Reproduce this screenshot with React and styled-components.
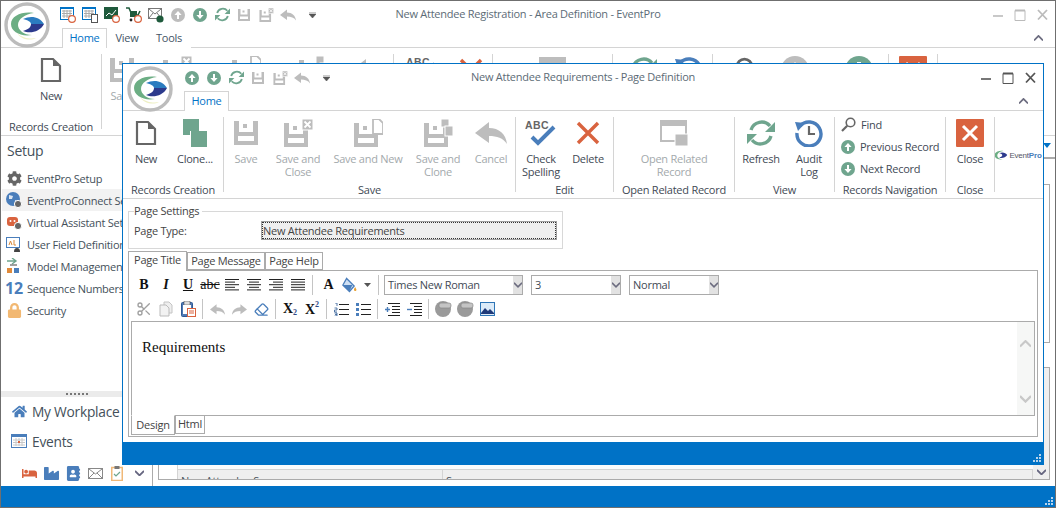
import React from 'react'
import styled, { createGlobalStyle } from 'styled-components'
import { FaCog, FaHome, FaBed, FaIndustry, FaAddressBook, FaLock } from 'react-icons/fa'
import { Scissors, Eraser } from 'lucide-react'

const BLUE = '#0072c6'
const GREY = '#bdbdbd'
const GREEN = '#6fa58e'
const STEEL = '#4a7ebb'
const RED = '#d9633f'

const GlobalStyle = createGlobalStyle`
    html, body {
        margin: 0;
        padding: 0;
        background: #fff;
        overflow: hidden;
    }
    body {
        font-family: 'Open Sans', 'Noto Sans', sans-serif;
        font-size: 11px;
        letter-spacing: -0.25px;
        color: #444;
    }
    * {
        box-sizing: border-box;
    }
`

/* ---------- icons ---------- */

const Logo = ({ size = 46 }) => (
    <svg width={size} height={size} viewBox='0 0 46 46'>
        <circle cx='23' cy='23' r='21' fill='#fff' stroke='#bcbcbc' strokeWidth='3.4' />
        <path d='M30 11C18 9 7 14 7 22c0 8 10 13 21 11-8 0-14-5-14-10 0-6 7-11 16-12z' fill='#6cae84' />
        <path d='M19 17c8-4 17-2 21 5-9 0-14 0-13 0 0-2-3-4-8-5z' fill='#2b7cc0' />
        <path d='M19 29c6-2 8-4 8-7h13c-4 8-14 10-21 7z' fill='#2c3a8c' />
        <path d='M13 31c6 6 15 6 19 5-5 3-15 2-19-5z' fill='#eef0c4' />
    </svg>
)

const PageIcon = () => (
    <svg width='22' height='26' viewBox='0 0 22 26'>
        <path d='M2 2h11l7 7v15H2z' fill='#fff' stroke='#666' strokeWidth='2.2' />
        <path d='M13 2v7h7z' fill='#666' />
    </svg>
)

const CloneIcon = () => (
    <svg width='26' height='28' viewBox='0 0 26 28'>
        <rect x='1' y='0' width='16' height='16' fill={GREEN} />
        <rect x='8' y='12' width='17' height='16' fill='#fff' />
        <rect x='9' y='12' width='16' height='16' fill={GREEN} />
    </svg>
)

const Floppy = ({ x = 0, y = 0, s = 24 }) => (
    <svg x={x} y={y} width={s} height={s} viewBox='0 0 24 24'>
        <rect width='24' height='24' fill={GREY} />
        <rect x='5' y='0' width='14' height='11' fill='#fff' />
        <rect x='9' y='3' width='4' height='4' fill={GREY} />
        <rect x='4' y='15' width='16' height='5' fill='#fff' />
    </svg>
)

const SaveIcon = ({ small }) => {
    const s = small ? 12 : 24
    return (
        <svg width={s} height={s} viewBox='0 0 24 24'>
            <Floppy />
        </svg>
    )
}

const SaveCloseIcon = ({ small }) => (
    <svg width={small ? 15 : 29} height={small ? 14 : 28} viewBox='0 0 29 28'>
        <Floppy y='4' s='24' />
        <rect x='18' y='0' width='11' height='11' fill={GREY} stroke='#fff' />
        <path d='M20.5 2.5l6 6m0-6l-6 6' stroke='#fff' strokeWidth='1.8' />
    </svg>
)

const SaveNewIcon = () => (
    <svg width='29' height='28' viewBox='0 0 29 28'>
        <Floppy y='4' s='24' />
        <path d='M19 0h6l4 4v11H19z' fill='#fff' stroke={GREY} strokeWidth='1.8' />
    </svg>
)

const SaveCloneIcon = () => (
    <svg width='29' height='28' viewBox='0 0 29 28'>
        <Floppy y='4' s='24' />
        <rect x='17' y='0' width='8' height='8' fill={GREY} stroke='#fff' />
        <rect x='21' y='7' width='8' height='10' fill={GREY} stroke='#fff' />
    </svg>
)

const BackArrow = ({ w = 32, h = 22, color = GREY, flip }) => (
    <svg width={w} height={h} viewBox='0 0 32 22' style={flip ? { transform: 'scaleX(-1)' } : undefined}>
        <path d='M0 11L14 0v6c10 0 17 6 18 16-4-6-10-8-18-8v7z' fill={color} />
    </svg>
)

const SpellIcon = () => (
    <svg width='32' height='28' viewBox='0 0 32 28'>
        <text x='0' y='10' fontFamily='Liberation Sans, sans-serif' fontWeight='700' fontSize='10.5' fill='#666' letterSpacing='0.4'>
            ABC
        </text>
        <path d='M7 18l6 6L29 8' fill='none' stroke={STEEL} strokeWidth='4' />
    </svg>
)

const CrossIcon = () => (
    <svg width='24' height='24' viewBox='0 0 24 24'>
        <path d='M2 2l20 20M22 2L2 22' stroke={RED} strokeWidth='3.4' />
    </svg>
)

const RelatedIcon = () => (
    <svg width='28' height='26' viewBox='0 0 28 26'>
        <rect x='1' y='1' width='25' height='20' fill='#fff' stroke={GREY} strokeWidth='2' />
        <rect x='0' y='0' width='27' height='6' fill={GREY} />
        <rect x='15' y='14' width='13' height='12' fill={GREY} stroke='#fff' />
    </svg>
)

const RefreshIcon = ({ size = 28, color = GREEN }) => (
    <svg width={size} height={size} viewBox='0 0 28 28'>
        <path d='M4 11a11 11 0 0 1 19-4' fill='none' stroke={color} strokeWidth='3.4' />
        <path d='M28 3v10H18z' fill={color} />
        <path d='M24 17a11 11 0 0 1-19 4' fill='none' stroke={color} strokeWidth='3.4' />
        <path d='M0 25V15h10z' fill={color} />
    </svg>
)

const AuditIcon = () => (
    <svg width='28' height='28' viewBox='0 0 28 28'>
        <path d='M5 7a12 12 0 1 1-3 7' fill='none' stroke={STEEL} strokeWidth='3.4' />
        <path d='M0 3l10 1-7 8z' fill={STEEL} />
        <path d='M14 7v8h6' fill='none' stroke='#666' strokeWidth='2.2' />
    </svg>
)

const MagnifierIcon = ({ size = 15, color = '#666' }) => (
    <svg width={size} height={size} viewBox='0 0 15 15'>
        <circle cx='9.5' cy='5.5' r='4.3' fill='none' stroke={color} strokeWidth='1.6' />
        <path d='M6.2 8.8L1 14' stroke={color} strokeWidth='2.2' />
    </svg>
)

const CircleArrow = ({ down, size = 14, color = GREEN }) => (
    <svg width={size} height={size} viewBox='0 0 14 14'>
        <circle cx='7' cy='7' r='7' fill={color} />
        <path d={down ? 'M7 11L3.4 7H6V3h2v4h2.6z' : 'M7 3l3.6 4H8v4H6V7H3.4z'} fill='#fff' />
    </svg>
)

const CloseBox = () => (
    <svg width='28' height='28' viewBox='0 0 28 28'>
        <rect width='28' height='28' rx='1' fill={RED} />
        <path d='M7 7l14 14M21 7L7 21' stroke='#fff' strokeWidth='3' />
    </svg>
)

const CalendarClock = ({ doc }) => (
    <svg width='16' height='16' viewBox='0 0 16 16'>
        <rect x='0.5' y='0.5' width='13' height='12' fill='#fff' stroke={BLUE} />
        <rect x='0' y='0' width='14' height='2' fill={BLUE} />
        <path d='M2 4h10M2 6.5h10M2 9h10M4 3v8M7 3v8M10 3v8' stroke='#aaa' strokeWidth='1' />
        {doc ? (
            <rect x='9.5' y='7.5' width='6' height='8' fill='#fff' stroke='#555' />
        ) : (
            <circle cx='12' cy='12' r='3.4' fill='#fff' stroke={RED} strokeWidth='1.2' />
        )}
    </svg>
)

const ChartClock = () => (
    <svg width='16' height='16' viewBox='0 0 16 16'>
        <rect width='14' height='12' fill='#1f5a3c' />
        <path d='M2 9l3-3 3 2 4-5' fill='none' stroke='#fff' strokeWidth='1' />
        <circle cx='12' cy='12' r='3.4' fill='#fff' stroke={RED} strokeWidth='1.2' />
    </svg>
)

const CartClock = () => (
    <svg width='16' height='16' viewBox='0 0 16 16'>
        <path d='M0 1h3l3 7h6l2-4' fill='none' stroke='#1f5a3c' strokeWidth='1.6' />
        <rect x='4' y='4' width='7' height='6' fill='#1f5a3c' />
        <circle cx='5' cy='13' r='1.4' fill='#222' />
        <circle cx='12' cy='12' r='3.4' fill='#fff' stroke={RED} strokeWidth='1.2' />
    </svg>
)

const MailBadge = () => (
    <svg width='17' height='16' viewBox='0 0 17 16'>
        <rect x='0.5' y='1.5' width='13' height='10' fill='#fff' stroke='#777' />
        <path d='M1 2l6 5 6-5M1 11l4-5M13 11L9 6' fill='none' stroke='#777' />
        <circle cx='12' cy='12' r='3.6' fill='#1f5a3c' />
    </svg>
)

const MiniLogo = () => (
    <LogoMark>
        <svg width='13' height='11' viewBox='8 9 34 28'>
            <path d='M30 11C18 9 7 14 7 22c0 8 10 13 21 11-8 0-14-5-14-10 0-6 7-11 16-12z' fill='#6cae84' />
            <path d='M19 17c8-4 17-2 21 5-4 7-14 9-21 7 6-2 8-4 8-7 0-2-3-4-8-5z' fill='#2c3a8c' />
        </svg>
        <span>
            Event<b>Pro</b>
        </span>
    </LogoMark>
)

const AlignIcon = ({ type }) => {
    const lines = {
        left: [[0, 14], [0, 10], [0, 14], [0, 10], [0, 14]],
        center: [[0, 14], [2, 12], [0, 14], [2, 12], [0, 14]],
        right: [[0, 14], [4, 14], [0, 14], [4, 14], [0, 14]],
        full: [[0, 14], [0, 14], [0, 14], [0, 14], [0, 14]],
    }[type]
    return (
        <svg width='14' height='12' viewBox='0 0 14 12'>
            {lines.map(([a, b], i) => (
                <path key={i} d={`M${a} ${i * 2.6 + 0.5}H${b}`} stroke='#222' />
            ))}
        </svg>
    )
}

const FillIcon = () => (
    <svg width='17' height='17' viewBox='0 0 17 17'>
        <path d='M6 1l8 8-5 6-7-7z' fill='#cfe0f4' stroke={STEEL} strokeWidth='1.4' />
        <path d='M2 8h10l-3 7z' fill={STEEL} />
        <path d='M15 10c1 2 2 3 1 4s-3 0-2-2z' fill='#e8a030' />
    </svg>
)

const CopyIcon = () => (
    <svg width='15' height='16' viewBox='0 0 15 16'>
        <path d='M5 1h5l3 3v8H5z' fill='#eee' stroke='#c4c4c4' />
        <path d='M1 4h6l3 3v8H1z' fill='#f2f2f2' stroke='#bbb' />
    </svg>
)

const PasteIcon = () => (
    <svg width='15' height='16' viewBox='0 0 15 16'>
        <rect x='0.5' y='1.5' width='11' height='14' rx='1' fill='#4f7ab5' stroke='#2e5a96' />
        <rect x='3' y='0' width='6' height='4' fill='#ddd' stroke='#555' strokeWidth='0.6' />
        <rect x='2' y='4' width='8' height='9' fill='#fff' />
        <rect x='6.5' y='7.5' width='8' height='8' fill='#fff' stroke={RED} />
        <path d='M8 10h5M8 12h5' stroke={RED} />
    </svg>
)

const ScriptIcon = ({ up }) => (
    <ScriptMark>
        X<sub data-up={up ? 1 : 0}>2</sub>
    </ScriptMark>
)

const ListIcon = ({ numbered }) => (
    <svg width='15' height='13' viewBox='0 0 15 13'>
        <path d='M5 1.5h10M5 6.5h10M5 11.5h10' stroke='#222' />
        {numbered ? (
            <path d='M1 0h2v3M0.5 5H3V7H0.5V9H3M0.5 10H3v3H0.5M1 11.5h2' fill='none' stroke='#2e5a96' strokeWidth='0.8' />
        ) : (
            <path d='M0 0h3v3H0zM0 5h3v3H0zM0 10h3v3H0z' fill={STEEL} />
        )}
    </svg>
)

const IndentIcon = ({ out }) => (
    <svg width='15' height='13' viewBox='0 0 15 13'>
        <path d='M3 0.5h12M7 3.5h8M7 6.5h8M7 9.5h8M3 12.5h12' stroke='#222' />
        <path d={out ? 'M0 6.5h5' : 'M0 6.5h5M2.5 4v5'} stroke={STEEL} strokeWidth='1.4' />
    </svg>
)

const LinkIcon = () => (
    <svg width='17' height='16' viewBox='0 0 17 16'>
        <circle cx='8' cy='8' r='8' fill='#9a9a9a' />
        <rect x='4' y='2' width='12' height='5' rx='2' fill='#c4c4c4' stroke='#888' strokeWidth='0.7' />
    </svg>
)

const PictureIcon = () => (
    <svg width='15' height='14' viewBox='0 0 15 14'>
        <rect x='0.5' y='0.5' width='14' height='13' fill='#dcebf8' stroke='#2e75b6' />
        <path d='M1 11l4-5 3 3 2-2 4 4v1H1z' fill='#1f3a7a' />
    </svg>
)

const GlobeGear = () => (
    <NavGlyph>
        <svg width='16' height='16' viewBox='0 0 16 16'>
            <circle cx='7' cy='7' r='7' fill={STEEL} />
            <path d='M3 3l4 1-1 3-3 0zM9 8l3 1-2 4-1-2z' fill='#dce6f2' />
            <circle cx='12' cy='12' r='3.6' fill='#666' stroke='#fff' />
        </svg>
    </NavGlyph>
)

const RobotGear = () => (
    <NavGlyph>
        <svg width='16' height='16' viewBox='0 0 16 16'>
            <rect x='1' y='3' width='11' height='9' rx='3' fill={RED} />
            <circle cx='4.5' cy='7' r='1' fill='#fff' />
            <circle cx='8.5' cy='7' r='1' fill='#fff' />
            <circle cx='12' cy='12' r='3.6' fill='#666' stroke='#fff' />
        </svg>
    </NavGlyph>
)

const FieldIcon = () => (
    <NavGlyph>
        <svg width='16' height='16' viewBox='0 0 16 16'>
            <rect x='0.5' y='1.5' width='13' height='10' fill='#fff' stroke={STEEL} />
            <path d='M3 9l1.5-4L6 9M8 4v5h2' fill='none' stroke='#d98a3a' />
            <path d='M8 16c0-3 1-4 3-4s3 1 3 4z' fill='#444' />
        </svg>
    </NavGlyph>
)

const ModelIcon = () => (
    <NavGlyph>
        <svg width='16' height='16' viewBox='0 0 16 16'>
            <path d='M1 3h8M6 0l4 3-4 3' fill='none' stroke={GREEN} strokeWidth='1.4' />
            <rect x='1' y='10' width='5' height='5' fill='#e08a3a' />
            <rect x='8' y='10' width='5' height='5' fill={STEEL} />
            <path d='M4 7h7' stroke='#777' strokeWidth='1.4' />
        </svg>
    </NavGlyph>
)

const EventsIcon = () => (
    <svg width='16' height='14' viewBox='0 0 16 14'>
        <rect x='0.5' y='0.5' width='15' height='13' fill='#fff' stroke={STEEL} />
        <rect x='0' y='0' width='16' height='3' fill={STEEL} />
        <path d='M2 6h12M2 8.5h12M2 11h12M5 4v8M8 4v8M11 4v8' stroke='#c8c8c8' />
        <rect x='7' y='7' width='2' height='2' fill={RED} />
    </svg>
)

const MailIcon = () => (
    <svg width='15' height='11' viewBox='0 0 15 11'>
        <rect x='0.5' y='0.5' width='14' height='10' fill='#fff' stroke='#888' />
        <path d='M1 1l6.5 5L14 1M1 10l5-5M14 10L9 5' fill='none' stroke='#888' />
    </svg>
)

const TaskIcon = () => (
    <svg width='12' height='15' viewBox='0 0 12 15'>
        <rect x='0.75' y='1.5' width='10.5' height='13' fill='#fff' stroke='#f0b878' strokeWidth='1.5' />
        <rect x='3.5' y='0' width='5' height='3' fill='#777' />
        <path d='M3 8l2 2 4-4' fill='none' stroke={GREEN} strokeWidth='1.2' />
    </svg>
)

const Chevron = ({ up, size = 9, color = '#6d6d80' }) => (
    <svg width={size} height={size * 0.7} viewBox='0 0 10 7'>
        <path d={up ? 'M0 6l5-5 5 5' : 'M0 1l5 5 5-5'} fill='none' stroke={color} strokeWidth='2' />
    </svg>
)

const QatDrop = () => (
    <svg width='7' height='6' viewBox='0 0 7 6'>
        <path d='M0 0h7M0 2h7L3.5 6z' fill='#555' stroke='#555' strokeWidth='0.6' />
    </svg>
)

const Grip = () => (
    <GripBox>
        <svg width='9' height='9' viewBox='0 0 9 9'>
            <path d='M7 1h2v2H7zM4 4h2v2H4zM7 4h2v2H7zM1 7h2v2H1zM4 7h2v2H4zM7 7h2v2H7z' fill='#b8d4ec' />
        </svg>
    </GripBox>
)

const WinControls = ({ muted }) => (
    <Controls>
        <svg width='14' height='14' viewBox='0 0 14 14'>
            <path d='M2 8h10' stroke={muted ? '#bbb' : '#555'} strokeWidth='1.6' />
        </svg>
        <svg width='12' height='14' viewBox='0 0 12 14'>
            <path d='M1 2.5h10v10H1z' fill='none' stroke={muted ? '#bbb' : '#555'} />
            <path d='M1 2.5h10' stroke={muted ? '#bbb' : '#555'} strokeWidth='2' />
        </svg>
        <svg width='14' height='14' viewBox='0 0 14 14'>
            <path d='M3 2l9 9.500M12 2l-9 9.500' stroke={muted ? '#bbb' : '#555'} strokeWidth='1.8' />
        </svg>
    </Controls>
)

/* ---------- chrome shared by both windows ---------- */

const TitleRow = styled.div`
    display: grid;
    grid-template-columns: 1fr auto 1fr;
    align-items: center;
    height: 27px;
    font-size: 11px;
    color: #5c6b76;
`

const TitleText = styled.span`
    margin-top: -2px;
`

const Qat = styled.div`
    display: flex;
    align-items: center;
    padding-left: ${(p) => p.$left}px;
`

const QatSlot = styled.span`
    flex: none;
    display: flex;
    align-items: center;
    justify-content: center;
    width: 22px;
    height: 18px;
    margin-left: ${(p) => p.$shift || 0}px;
`

const Controls = styled.div`
    display: flex;
    justify-content: flex-end;
    align-items: center;
    gap: 9px;
    padding-right: 6px;
`

const TabRow = styled.div`
    display: flex;
    align-items: flex-end;
    height: 19px;
    padding-left: ${(p) => p.$left}px;
    position: relative;
    font-size: 11px;
`

const RibbonTab = styled.div`
    height: 20px;
    margin-bottom: -1px;
    line-height: 18px;
    text-align: center;
    width: ${(p) => p.$w}px;
    color: ${(p) => (p.$active ? BLUE : '#445566')};
    background: #fff;
    border: 1px solid ${(p) => (p.$active ? '#d4d4d4' : 'transparent')};
    border-bottom: 0;
    position: relative;
    z-index: 1;
`

const Collapse = styled.span`
    position: absolute;
    right: ${(p) => p.$right}px;
    top: 7px;
    display: flex;
`

const Ribbon = styled.div`
    display: flex;
    height: 89px;
    padding-top: 6px;
    border-top: 1px solid #d4d4d4;
    border-bottom: 1px solid #d4d4d4;
`

const Group = styled.div`
    flex: none;
    display: flex;
    flex-direction: column;
    width: ${(p) => p.$w}px;
    height: 75px;
    border-right: 1px solid ${(p) => (p.$plain ? 'transparent' : '#d4d4d4')};
`

const GroupItems = styled.div`
    flex: 1;
    display: flex;
    justify-content: ${(p) => (p.$center ? 'center' : 'flex-start')};
    gap: ${(p) => p.$gap || 0}px;
    padding-left: ${(p) => p.$left || 0}px;
    min-height: 0;
`

const GroupLabel = styled.div`
    height: 13px;
    margin-bottom: -4px;
    line-height: 13px;
    text-align: center;
    white-space: nowrap;
    color: #3f4a55;
`

const BigButton = styled.div`
    flex: none;
    display: flex;
    flex-direction: column;
    align-items: center;
    width: ${(p) => p.$w}px;
    color: ${(p) => (p.$off ? '#a3a9ac' : '#3f4a55')};
`

const BigIcon = styled.div`
    display: flex;
    align-items: center;
    justify-content: center;
    height: 31px;
    width: 100%;
`

const BigLabel = styled.div`
    margin-top: 4px;
    line-height: 13px;
    text-align: center;
    white-space: nowrap;
`

const Stack = styled.div`
    display: flex;
    flex-direction: column;
    gap: 7px;
    padding-left: 6px;
`

const StackRow = styled.div`
    display: flex;
    align-items: center;
    gap: 5px;
    height: 15px;
    white-space: nowrap;
    color: #3f4a55;
`

const LogoMark = styled.div`
    align-self: flex-start;
    display: flex;
    align-items: center;
    gap: 1px;
    height: 20px;
    margin-top: 28px;
    font-family: 'Liberation Sans', sans-serif;
    font-size: 8px;
    letter-spacing: -0.2px;
    color: #556;
    b {
        color: ${STEEL};
    }
`

const StatusBar = styled.div`
    flex: none;
    position: relative;
    height: ${(p) => p.$h}px;
    background: ${BLUE};
`

const GripBox = styled.span`
    position: absolute;
    right: 2px;
    bottom: 2px;
    display: flex;
`

/* ---------- back window ---------- */

const Desktop = styled.div`
    position: relative;
    display: flex;
    flex-direction: column;
    width: 1056px;
    height: 508px;
    overflow: hidden;
    background: #fff;
    border: 1px solid #6f6f6f;
`

const LogoSlot = styled.div`
    position: absolute;
    left: ${(p) => p.$x}px;
    top: ${(p) => p.$y}px;
    display: flex;
    z-index: 2;
`

const BackBody = styled.div`
    flex: 1;
    display: flex;
    min-height: 0;
`

const Rail = styled.nav`
    flex: none;
    display: flex;
    flex-direction: column;
    width: 152px;
    border-right: 1px solid #ababab;
`

const RailTitle = styled.div`
    height: 30px;
    padding-left: 6px;
    font-size: 14px;
    line-height: 30px;
    color: #44505a;
`

const RailList = styled.div`
    display: flex;
    flex-direction: column;
    margin-top: 1px;
`

const RailRow = styled.div`
    display: flex;
    align-items: center;
    gap: 5px;
    height: 22px;
    margin-left: 1px;
    padding-left: 4px;
    white-space: nowrap;
    overflow: hidden;
    color: #44505a;
    background: ${(p) => (p.$on ? '#f2f2f2' : 'transparent')};
`

const NavGlyph = styled.span`
    flex: none;
    display: flex;
    align-items: center;
    justify-content: center;
    width: 16px;
    height: 16px;
    color: ${(p) => p.color || '#666'};
    font-size: ${(p) => p.$size || 15}px;
    font-weight: 700;
`

const Splitter = styled.div`
    display: flex;
    align-items: center;
    justify-content: center;
    gap: 2px;
    height: 6px;
    margin-top: auto;
    background: #ebebeb;
    i {
        width: 2px;
        height: 2px;
        background: #777;
    }
`

const WideRow = styled.div`
    display: flex;
    align-items: center;
    gap: 5px;
    height: 30px;
    padding: 0 0 2px 10px;
    font-size: 13.75px;
    color: #44505a;
`

const IconStrip = styled.div`
    display: flex;
    align-items: center;
    gap: 6px;
    height: 29px;
    padding: 3px 0 0 20px;
    color: ${STEEL};
    font-size: 14px;
`

const BackMain = styled.div`
    flex: 1;
    display: flex;
    flex-direction: column;
    padding: 0 5px 6px 5px;
    min-width: 0;
`

const BackStrip = styled.div`
    position: relative;
    height: 23px;
    border-bottom: 2px solid #ababab;
    margin-right: -5px;
`

const BlueDrop = styled.span`
    position: absolute;
    right: 4px;
    top: 7px;
    width: 0;
    height: 0;
    border-left: 4px solid transparent;
    border-right: 4px solid transparent;
    border-top: 5px solid ${BLUE};
`

const UpperBox = styled.div`
    height: 159px;
    margin-top: 25px;
    border: 1px solid #ababab;
`

const LowerBox = styled.div`
    display: flex;
    flex: 1;
    margin-top: 24px;
    border: 1px solid #ababab;
`

const Gutter = styled.div`
    flex: none;
    width: 19px;
    border-right: 1px solid #d4d4d4;
`

const Sheet = styled.div`
    flex: 1;
    display: flex;
    flex-direction: column;
    min-width: 0;
`

const SheetSpace = styled.div`
    height: 24px;
    border-bottom: 1px solid #d4d4d4;
`

const SheetFill = styled.div`
    flex: 1;
    background: #fbfbfb;
    border-bottom: 1px solid #d4d4d4;
`

const SheetFoot = styled.div`
    display: grid;
    grid-template-columns: 265px 1fr;
    height: 9px;
    background: #efefef;
    overflow: hidden;
    line-height: 13px;
    color: #44505a;
    div {
        padding: 4px 0 0 3px;
        white-space: nowrap;
        border-right: 1px solid #d4d4d4;
    }
`

const ScrollCol = styled.div`
    flex: none;
    display: flex;
    flex-direction: column;
    justify-content: flex-end;
    align-items: center;
    width: 16px;
    background: #efefef;
    padding-bottom: 4px;
`

/* ---------- dialog ---------- */

const Dialog = styled.section`
    position: absolute;
    left: 121px;
    top: 62px;
    display: flex;
    flex-direction: column;
    width: 922px;
    height: 402px;
    background: #fff;
    border: 1px solid ${BLUE};
    z-index: 3;
`

const DialogBody = styled.div`
    flex: 1;
    display: flex;
    flex-direction: column;
    padding: 6px 5px 5px;
    min-height: 0;
`

const Settings = styled.fieldset`
    width: 435px;
    height: 44px;
    margin: 0;
    padding: 0 5px;
    border: 1px solid #d8d8d8;
    legend {
        padding: 0 3px 0 0;
        line-height: 12px;
    }
`

const SettingsRow = styled.div`
    display: flex;
    align-items: center;
    margin-top: 4px;
`

const FieldLabel = styled.span`
    width: 127px;
`

const FieldValue = styled.div`
    width: 296px;
    height: 19px;
    padding-left: 1px;
    line-height: 18px;
    background: #efefef;
    border: 1px solid #a0a0a0;
    outline: 1px dotted #333;
    outline-offset: -2px;
`

const PageTabs = styled.div`
    display: flex;
    align-items: flex-end;
    height: 19px;
    margin-top: 2px;
`

const PageTab = styled.div`
    width: ${(p) => p.$w}px;
    height: ${(p) => (p.$active ? 20 : 18)}px;
    margin-bottom: ${(p) => (p.$active ? -1 : 0)}px;
    line-height: 16px;
    text-align: center;
    background: #fff;
    border: 1px solid #ababab;
    border-bottom: ${(p) => (p.$active ? 0 : 1)}px solid #ababab;
    position: relative;
    z-index: 1;
`

const Panel = styled.div`
    flex: 1;
    display: flex;
    flex-direction: column;
    padding: 4px 2px 0;
    border: 1px solid #ababab;
    min-height: 0;
`

const Tools = styled.div`
    display: flex;
    align-items: center;
    height: ${(p) => p.$h}px;
    padding-left: 2px;
    margin-top: ${(p) => p.$top || 0}px;
`

const Tool = styled.span`
    flex: none;
    display: flex;
    align-items: center;
    justify-content: center;
    width: ${(p) => p.$w || 22}px;
    height: 20px;
    color: ${(p) => p.$color || '#111'};
    font-family: 'Liberation Serif', serif;
    font-size: 14px;
    letter-spacing: 0;
    font-weight: ${(p) => (p.$bold ? 700 : 400)};
    font-style: ${(p) => (p.$italic ? 'italic' : 'normal')};
    text-decoration: ${(p) => p.$line || 'none'};
`

const ToolGap = styled.span`
    flex: none;
    width: 1px;
    height: 20px;
    margin: 0 ${(p) => (p.$tight ? 0 : 3)}px 0 ${(p) => (p.$tight ? 0 : 3)}px;
    background: #c4c4c4;
`

const ScriptMark = styled.span`
    font-family: 'Liberation Serif', serif;
    font-weight: 700;
    font-size: 14px;
    color: #111;
    sub {
        font-size: 8px;
        color: #2e4a86;
        vertical-align: -2px;
        &[data-up='1'] {
            vertical-align: 7px;
        }
    }
`

const Combo = styled.div`
    flex: none;
    display: flex;
    width: ${(p) => p.$w}px;
    height: 20px;
    margin-left: ${(p) => p.$left || 0}px;
    border: 1px solid #ababab;
    font-size: 11px;
    line-height: 18px;
`

const ComboText = styled.span`
    flex: 1;
    padding-left: 3px;
    color: #3f4a55;
    white-space: nowrap;
`

const ComboDrop = styled.span`
    flex: none;
    display: flex;
    align-items: center;
    justify-content: center;
    width: 9px;
    background: #e2e2e2;
`

const Editor = styled.div`
    display: flex;
    height: 95px;
    margin-top: 1px;
    border: 1px solid #ababab;
`

const EditorText = styled.div`
    flex: 1;
    padding: 16px 0 0 10px;
    font-family: 'Liberation Serif', serif;
    font-size: 15px;
    letter-spacing: 0;
    line-height: 18px;
    color: #111;
`

const EditorScroll = styled.div`
    flex: none;
    display: flex;
    flex-direction: column;
    align-items: center;
    justify-content: space-between;
    width: 17px;
    padding: 18px 0 12px;
    background: #f6f7f6;
`

const ModeTabs = styled.div`
    display: flex;
    align-items: flex-start;
    margin-top: -1px;
`

const ModeTab = styled.div`
    width: ${(p) => p.$w}px;
    height: ${(p) => (p.$active ? 20 : 19)}px;
    line-height: ${(p) => (p.$active ? 18 : 16)}px;
    text-align: center;
    background: #fff;
    border: 1px solid #ababab;
    border-top: ${(p) => (p.$active ? '1px solid #fff' : '1px solid #ababab')};
`

/* ---------- data ---------- */

const backQat = [
    <CalendarClock />, <CalendarClock doc />, <ChartClock />, <CartClock />, <MailBadge />,
    <CircleArrow color={GREY} />, <CircleArrow down />, <RefreshIcon size={15} />,
    <SaveIcon small />, <SaveCloseIcon small />, <BackArrow w={16} h={12} />,
]

const dialogQat = [
    <CircleArrow />, <CircleArrow down />, <RefreshIcon size={15} />,
    <SaveIcon small />, <SaveCloseIcon small />, <BackArrow w={16} h={12} />,
]

const railRows = [
    { icon: <NavGlyph><FaCog /></NavGlyph>, text: 'EventPro Setup' },
    { icon: <GlobeGear />, text: 'EventProConnect Setup', on: true },
    { icon: <RobotGear />, text: 'Virtual Assistant Setup' },
    { icon: <FieldIcon />, text: 'User Field Definitions' },
    { icon: <ModelIcon />, text: 'Model Management' },
    { icon: <NavGlyph color={STEEL} $size={16}>12</NavGlyph>, text: 'Sequence Numbers' },
    { icon: <NavGlyph color='#f2b872'><FaLock /></NavGlyph>, text: 'Security' },
]

const App = () => (
    <>
        <GlobalStyle />
        <Desktop>
            <LogoSlot $x={3} $y={1}>
                <Logo />
            </LogoSlot>
            <TitleRow>
                <Qat $left={56}>
                    {backQat.map((icon, i) => (
                        <QatSlot key={i}>{icon}</QatSlot>
                    ))}
                    <QatSlot $shift={2}>
                        <QatDrop />
                    </QatSlot>
                </Qat>
                <TitleText>New Attendee Registration - Area Definition - EventPro</TitleText>
                <WinControls muted />
            </TitleRow>
            <TabRow $left={61}>
                <RibbonTab $active $w={45}>Home</RibbonTab>
                <RibbonTab $w={40}>View</RibbonTab>
                <RibbonTab $w={44}>Tools</RibbonTab>
                <Collapse $right={12}>
                    <Chevron up />
                </Collapse>
            </TabRow>
            <Ribbon>
                <Group $w={101}>
                    <GroupItems $center>
                        <BigButton $w={60}>
                            <BigIcon><PageIcon /></BigIcon>
                            <BigLabel>New</BigLabel>
                        </BigButton>
                    </GroupItems>
                    <GroupLabel>Records Creation</GroupLabel>
                </Group>
                <Group $w={292}>
                    <GroupItems $left={2} $gap={3}>
                        <BigButton $off $w={36}>
                            <BigIcon><SaveIcon /></BigIcon>
                            <BigLabel>Save</BigLabel>
                        </BigButton>
                        <BigButton $off $w={68}>
                            <BigIcon><SaveCloseIcon /></BigIcon>
                        </BigButton>
                        <BigButton $off $w={64}>
                            <BigIcon><SaveNewIcon /></BigIcon>
                        </BigButton>
                        <BigButton $off $w={64}>
                            <BigIcon><SaveCloneIcon /></BigIcon>
                        </BigButton>
                        <BigButton $off $w={40}>
                            <BigIcon><BackArrow /></BigIcon>
                        </BigButton>
                    </GroupItems>
                </Group>
                <Group $w={99}>
                    <GroupItems $left={8} $gap={14}>
                        <BigButton $w={40}><BigIcon><SpellIcon /></BigIcon></BigButton>
                        <BigButton $w={30}><BigIcon><CrossIcon /></BigIcon></BigButton>
                    </GroupItems>
                </Group>
                <Group $w={120}>
                    <GroupItems $center>
                        <BigButton $w={60}><BigIcon><RelatedIcon /></BigIcon></BigButton>
                    </GroupItems>
                </Group>
                <Group $w={100}>
                    <GroupItems $left={10} $gap={6}>
                        <BigButton $w={40}><BigIcon><RefreshIcon /></BigIcon></BigButton>
                        <BigButton $w={40}><BigIcon><AuditIcon /></BigIcon></BigButton>
                    </GroupItems>
                </Group>
                <Group $w={176}>
                    <GroupItems $left={8} $gap={14}>
                        <BigButton $w={40}><BigIcon><MagnifierIcon size={26} /></BigIcon></BigButton>
                        <BigButton $w={40}><BigIcon><CircleArrow size={28} color={GREY} /></BigIcon></BigButton>
                        <BigButton $w={60}><BigIcon><CircleArrow down size={28} /></BigIcon></BigButton>
                    </GroupItems>
                </Group>
                <Group $w={49}>
                    <GroupItems $center>
                        <BigButton $w={40}><BigIcon><CloseBox /></BigIcon></BigButton>
                    </GroupItems>
                </Group>
            </Ribbon>
            <BackBody>
                <Rail>
                    <RailTitle>Setup</RailTitle>
                    <RailList>
                        {railRows.map((row) => (
                            <RailRow key={row.text} $on={row.on}>
                                {row.icon}
                                {row.text}
                            </RailRow>
                        ))}
                    </RailList>
                    <Splitter>
                        <i /><i /><i /><i /><i /><i />
                    </Splitter>
                    <WideRow>
                        <NavGlyph color={STEEL}><FaHome /></NavGlyph>
                        My Workplace
                    </WideRow>
                    <WideRow>
                        <EventsIcon />
                        Events
                    </WideRow>
                    <IconStrip>
                        <NavGlyph color={RED}><FaBed /></NavGlyph>
                        <NavGlyph><FaIndustry color={STEEL} /></NavGlyph>
                        <NavGlyph><FaAddressBook color={STEEL} /></NavGlyph>
                        <NavGlyph><MailIcon /></NavGlyph>
                        <NavGlyph><TaskIcon /></NavGlyph>
                        <NavGlyph><Chevron color='#666680' /></NavGlyph>
                    </IconStrip>
                </Rail>
                <BackMain>
                    <BackStrip>
                        <BlueDrop />
                    </BackStrip>
                    <UpperBox />
                    <LowerBox>
                        <Gutter />
                        <Sheet>
                            <SheetSpace />
                            <SheetSpace />
                            <SheetFill />
                            <SheetFoot>
                                <div>New Attendee Summary</div>
                                <div>Summary</div>
                            </SheetFoot>
                        </Sheet>
                        <ScrollCol>
                            <Chevron color='#666680' />
                        </ScrollCol>
                    </LowerBox>
                </BackMain>
            </BackBody>
            <StatusBar $h={21}>
                <Grip />
            </StatusBar>

            <Dialog>
                <LogoSlot $x={4} $y={2}>
                    <Logo />
                </LogoSlot>
                <TitleRow>
                    <Qat $left={58}>
                        {dialogQat.map((icon, i) => (
                            <QatSlot key={i}>{icon}</QatSlot>
                        ))}
                        <QatSlot $shift={2}>
                            <QatDrop />
                        </QatSlot>
                    </Qat>
                    <TitleText>New Attendee Requirements - Page Definition</TitleText>
                    <WinControls />
                </TitleRow>
                <TabRow $left={61}>
                    <RibbonTab $active $w={45}>Home</RibbonTab>
                    <Collapse $right={15}>
                        <Chevron up />
                    </Collapse>
                </TabRow>
                <Ribbon>
                    <Group $w={101}>
                        <GroupItems $left={1} $gap={3}>
                            <BigButton $w={44}>
                                <BigIcon><PageIcon /></BigIcon>
                                <BigLabel>New</BigLabel>
                            </BigButton>
                            <BigButton $w={48}>
                                <BigIcon><CloneIcon /></BigIcon>
                                <BigLabel>Clone...</BigLabel>
                            </BigButton>
                        </GroupItems>
                        <GroupLabel>Records Creation</GroupLabel>
                    </Group>
                    <Group $w={292}>
                        <GroupItems $left={3} $gap={4}>
                            <BigButton $off $w={38}>
                                <BigIcon><SaveIcon /></BigIcon>
                                <BigLabel>Save</BigLabel>
                            </BigButton>
                            <BigButton $off $w={58}>
                                <BigIcon><SaveCloseIcon /></BigIcon>
                                <BigLabel>Save and<br />Close</BigLabel>
                            </BigButton>
                            <BigButton $off $w={74}>
                                <BigIcon><SaveNewIcon /></BigIcon>
                                <BigLabel>Save and New</BigLabel>
                            </BigButton>
                            <BigButton $off $w={58}>
                                <BigIcon><SaveCloneIcon /></BigIcon>
                                <BigLabel>Save and<br />Clone</BigLabel>
                            </BigButton>
                            <BigButton $off $w={40}>
                                <BigIcon><BackArrow /></BigIcon>
                                <BigLabel>Cancel</BigLabel>
                            </BigButton>
                        </GroupItems>
                        <GroupLabel>Save</GroupLabel>
                    </Group>
                    <Group $w={98}>
                        <GroupItems $left={4} $gap={6}>
                            <BigButton $w={42}>
                                <BigIcon><SpellIcon /></BigIcon>
                                <BigLabel>Check<br />Spelling</BigLabel>
                            </BigButton>
                            <BigButton $w={40}>
                                <BigIcon><CrossIcon /></BigIcon>
                                <BigLabel>Delete</BigLabel>
                            </BigButton>
                        </GroupItems>
                        <GroupLabel>Edit</GroupLabel>
                    </Group>
                    <Group $w={121}>
                        <GroupItems $center>
                            <BigButton $off $w={90}>
                                <BigIcon><RelatedIcon /></BigIcon>
                                <BigLabel>Open Related<br />Record</BigLabel>
                            </BigButton>
                        </GroupItems>
                        <GroupLabel>Open Related Record</GroupLabel>
                    </Group>
                    <Group $w={100}>
                        <GroupItems $left={6} $gap={9}>
                            <BigButton $w={40}>
                                <BigIcon><RefreshIcon /></BigIcon>
                                <BigLabel>Refresh</BigLabel>
                            </BigButton>
                            <BigButton $w={38}>
                                <BigIcon><AuditIcon /></BigIcon>
                                <BigLabel>Audit<br />Log</BigLabel>
                            </BigButton>
                        </GroupItems>
                        <GroupLabel>View</GroupLabel>
                    </Group>
                    <Group $w={111}>
                        <GroupItems>
                            <Stack>
                                <StackRow><MagnifierIcon />Find</StackRow>
                                <StackRow><CircleArrow />Previous Record</StackRow>
                                <StackRow><CircleArrow down />Next Record</StackRow>
                            </Stack>
                        </GroupItems>
                        <GroupLabel>Records Navigation</GroupLabel>
                    </Group>
                    <Group $w={49}>
                        <GroupItems $center>
                            <BigButton $w={40}>
                                <BigIcon><CloseBox /></BigIcon>
                                <BigLabel>Close</BigLabel>
                            </BigButton>
                        </GroupItems>
                        <GroupLabel>Close</GroupLabel>
                    </Group>
                    <Group $w={48} $plain>
                        <GroupItems $center>
                            <MiniLogo />
                        </GroupItems>
                    </Group>
                </Ribbon>
                <DialogBody>
                    <Settings>
                        <legend>Page Settings</legend>
                        <SettingsRow>
                            <FieldLabel>Page Type:</FieldLabel>
                            <FieldValue>New Attendee Requirements</FieldValue>
                        </SettingsRow>
                    </Settings>
                    <PageTabs>
                        <PageTab $active $w={59}>Page Title</PageTab>
                        <PageTab $w={78}>Page Message</PageTab>
                        <PageTab $w={58}>Page Help</PageTab>
                    </PageTabs>
                    <Panel>
                        <Tools $h={20}>
                            <Tool $bold>B</Tool>
                            <Tool $bold $italic>I</Tool>
                            <Tool $bold $line='underline'>U</Tool>
                            <Tool $line='line-through' $w={22}>abc</Tool>
                            <Tool><AlignIcon type='left' /></Tool>
                            <Tool><AlignIcon type='center' /></Tool>
                            <Tool><AlignIcon type='right' /></Tool>
                            <Tool><AlignIcon type='full' /></Tool>
                            <ToolGap />
                            <Tool $bold $w={25}>A</Tool>
                            <Tool $w={16}><FillIcon /></Tool>
                            <Tool $w={21}>
                                <svg width='7' height='4' viewBox='0 0 7 4'>
                                    <path d='M0 0h7L3.500 4z' fill='#555' />
                                </svg>
                            </Tool>
                            <ToolGap $tight />
                            <Combo $w={139} $left={5}>
                                <ComboText>Times New Roman</ComboText>
                                <ComboDrop><Chevron size={8} /></ComboDrop>
                            </Combo>
                            <Combo $w={90} $left={8}>
                                <ComboText>3</ComboText>
                                <ComboDrop><Chevron size={8} /></ComboDrop>
                            </Combo>
                            <Combo $w={90} $left={8}>
                                <ComboText>Normal</ComboText>
                                <ComboDrop><Chevron size={8} /></ComboDrop>
                            </Combo>
                        </Tools>
                        <Tools $h={22} $top={3}>
                            <Tool><Scissors size={16} color='#a0a0a0' /></Tool>
                            <Tool><CopyIcon /></Tool>
                            <Tool><PasteIcon /></Tool>
                            <ToolGap />
                            <Tool><BackArrow w={15} h={11} /></Tool>
                            <Tool><BackArrow w={15} h={11} flip /></Tool>
                            <Tool><Eraser size={15} color={STEEL} /></Tool>
                            <ToolGap />
                            <Tool><ScriptIcon /></Tool>
                            <Tool><ScriptIcon up /></Tool>
                            <ToolGap />
                            <Tool><ListIcon numbered /></Tool>
                            <Tool><ListIcon /></Tool>
                            <ToolGap />
                            <Tool><IndentIcon /></Tool>
                            <Tool><IndentIcon out /></Tool>
                            <ToolGap />
                            <Tool><LinkIcon /></Tool>
                            <Tool><LinkIcon /></Tool>
                            <Tool><PictureIcon /></Tool>
                        </Tools>
                        <Editor>
                            <EditorText>Requirements</EditorText>
                            <EditorScroll>
                                <Chevron up size={11} color='#c8c8c8' />
                                <Chevron size={11} color='#c8c8c8' />
                            </EditorScroll>
                        </Editor>
                        <ModeTabs>
                            <ModeTab $active $w={44}>Design</ModeTab>
                            <ModeTab $w={30}>Html</ModeTab>
                        </ModeTabs>
                    </Panel>
                </DialogBody>
                <StatusBar $h={22}>
                    <Grip />
                </StatusBar>
            </Dialog>
        </Desktop>
    </>
)

export default App
